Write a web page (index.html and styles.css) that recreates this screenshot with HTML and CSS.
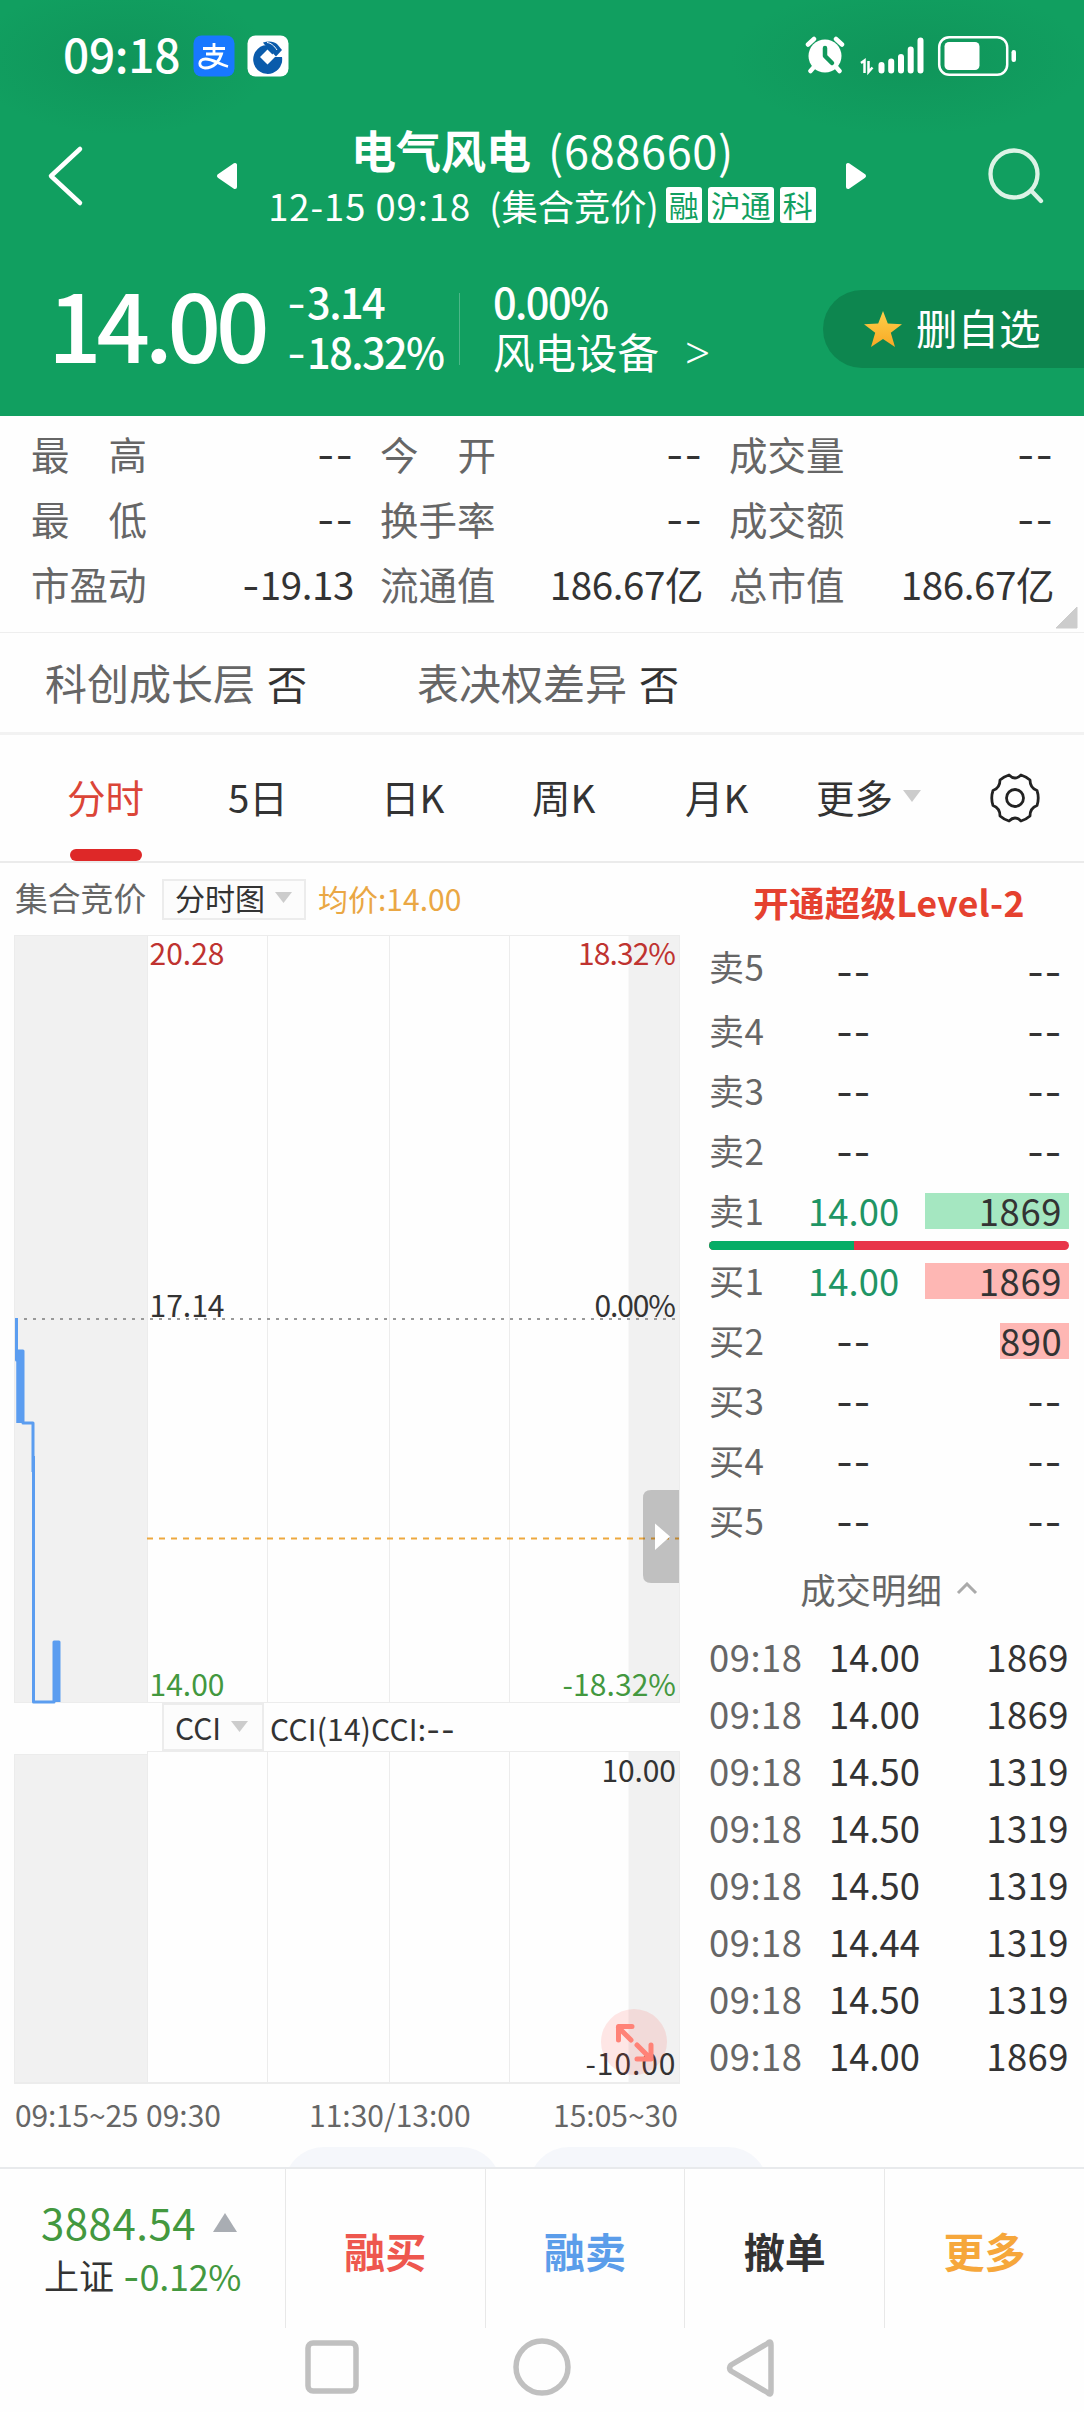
FILE: index.html
```html
<!DOCTYPE html>
<html lang="zh-CN">
<head>
<meta charset="utf-8">
<title>电气风电 (688660)</title>
<link rel="stylesheet" href="styles.css">
</head>
<body>
<div class="screen">
  <header class="top">
    <div class="status">
      <span class="clock">09:18</span>
      <svg class="app-icon" width="42" height="42" viewBox="0 0 42 42">
        <rect x=".5" y=".5" width="41" height="41" rx="8" fill="#1878ff"/>
        <path d="M10 13.500h22M21 8v11M13 19h15.500C26.500 26 21 33 12 33 5 33 5 24 12.500 24 20 24 26 29.500 35 31.500" fill="none" stroke="#fff" stroke-width="2.800"/>
      </svg>
      <svg class="app-icon second" width="42" height="42" viewBox="0 0 42 42">
        <rect x=".5" y=".5" width="41" height="41" rx="8" fill="#fff"/>
        <path d="M29 12.500A14.500 14.500 0 1 0 35 22H28L20.500 29.500 13 22l7.500-7.500 5 5Z" fill="#0a5bab"/>
        <path d="M16 7.500c6-2 11-1 14 1.500l5 6-6 6.500L17 9Z" fill="#0a5bab"/>
        <path d="M20 7.500c4 .5 7 3 10 7.500" fill="none" stroke="#fff" stroke-width="1"/>
      </svg>
      <svg class="status-icons" width="212" height="42" viewBox="0 0 212 42">
        <circle cx="20" cy="21" r="16.500" fill="#fff"/>
        <path d="M3 9.500 9 4M31 4l6 5.500M9 32l-3.500 4M31 32l3.500 4" stroke="#fff" stroke-width="4.500" stroke-linecap="round"/>
        <path d="M20 13v8l7 7" fill="none" stroke="#11985b" stroke-width="4.500" stroke-linecap="round" stroke-linejoin="round"/>
        <path d="M56 28l3.500-2.500V38M63.500 26v11l4-4.500" fill="none" stroke="#fff" stroke-width="2.500"/>
        <path d="M76.500 30v5.500M86.200 26.500v9M96 22v13.500M105.700 14.500v21M115.500 5.500v30" stroke="#fff" stroke-width="6" stroke-linecap="round"/>
        <rect x="134.200" y="2.200" width="68" height="37.500" rx="10" fill="none" stroke="#fff" stroke-width="2.500"/>
        <rect x="139.500" y="7" width="35" height="28" rx="4.500" fill="#fff"/>
        <rect x="206.500" y="15" width="4.500" height="12" rx="2.200" fill="#fff"/>
      </svg>
    </div>
    <div class="titlebar">
      <svg class="back" width="38" height="62" viewBox="0 0 38 62"><path d="M33 4 4 31l29 27" fill="none" stroke="#fff" stroke-width="4.500" stroke-linecap="round" stroke-linejoin="round"/></svg>
      <svg class="prev" width="22" height="28" viewBox="0 0 22 28"><path d="M19 3v22L3 14Z" fill="#fff" stroke="#fff" stroke-width="4" stroke-linejoin="round"/></svg>
      <div class="heading">
        <h1 class="name"><span class="cn">电气风电</span><span class="code">(688660)</span></h1>
        <div class="session">
          <span class="date">12-15 09:18</span><span class="phase">(集合竞价)</span><span class="badge">融</span><span class="badge">沪通</span><span class="badge">科</span>
        </div>
      </div>
      <svg class="next" width="22" height="28" viewBox="0 0 22 28"><path d="M3 3v22l16-11Z" fill="#fff" stroke="#fff" stroke-width="4" stroke-linejoin="round"/></svg>
      <svg class="search" width="58" height="58" viewBox="0 0 58 58"><g fill="none" stroke="#dcf3e6" stroke-width="4.300" stroke-linecap="round"><circle cx="28" cy="27" r="23.500"/><path d="m46 44.500 9 9.500"/></g></svg>
    </div>
    <div class="quote">
      <span class="price">14.00</span>
      <div class="change"><span><b class="neg">-</b>3.14</span><span><b class="neg">-</b>18.32%</span></div>
      <i class="rule"></i>
      <div class="sector"><span>0.00%</span><span class="sector-name">风电设备<b class="more-arrow">&gt;</b></span></div>
      <div class="watch">
        <svg width="38" height="37" viewBox="0 0 38 37"><defs><linearGradient id="gold" x1="0" y1="0" x2="0" y2="1"><stop offset="0" stop-color="#fdd04a"/><stop offset="1" stop-color="#f9a825"/></linearGradient></defs><path d="M19 0l4.800 12.500L38 13.300 26.800 21.700 31 36 19 28 7 36l4.200-14.300L0 13.300l14.200-.8Z" fill="url(#gold)"/></svg>
        <span>删自选</span>
      </div>
    </div>
  </header>

  <section class="stats">
    <div class="stat"><span class="k">最<i></i>高</span><span class="dash">--</span></div>
    <div class="stat"><span class="k">今<i></i>开</span><span class="dash">--</span></div>
    <div class="stat"><span class="k">成交量</span><span class="dash">--</span></div>
    <div class="stat"><span class="k">最<i></i>低</span><span class="dash">--</span></div>
    <div class="stat"><span class="k">换手率</span><span class="dash">--</span></div>
    <div class="stat"><span class="k">成交额</span><span class="dash">--</span></div>
    <div class="stat"><span class="k">市盈动</span><span class="v"><b class="neg">-</b>19.13</span></div>
    <div class="stat"><span class="k">流通值</span><span class="v">186.67亿</span></div>
    <div class="stat"><span class="k">总市值</span><span class="v">186.67亿</span></div>
    <svg class="corner" width="23" height="23" viewBox="0 0 23 23"><path d="M22 1v21H1Z" fill="#ccc" stroke="#ccc" stroke-linejoin="round"/></svg>
  </section>

  <section class="attrs">
    <div class="attr">科创成长层<em>否</em></div>
    <div class="attr">表决权差异<em>否</em></div>
  </section>

  <nav class="tabs">
    <span class="tab t1 active">分时</span>
    <span class="tab t2">5日</span>
    <span class="tab t3">日K</span>
    <span class="tab t4">周K</span>
    <span class="tab t5">月K</span>
    <span class="tab t6">更多<svg width="18" height="12" viewBox="0 0 18 12"><path d="M0 0h18L9 12Z" fill="#ccc"/></svg></span>
    <svg class="gear" width="50" height="50" viewBox="-25 -25 50 50"><g fill="none" stroke="#222" stroke-width="2.800" stroke-linejoin="round"><path d="M-6-23Q0-17 6-23 11-21.500 15-18 15-10 22-7.500 24.500 0 22 7.500 15 10 15 18 11 21.500 6 23 0 17-6 23-11 21.500-15 18-15 10-22 7.500-24.500 0-22-7.500-15-10-15-18-11-21.500-6-23Z"/><circle r="8.500"/></g></svg>
  </nav>

  <main class="main">
    <div class="charts">
      <div class="chart-head">
        <span class="auction">集合竞价</span>
        <span class="select">分时图<svg width="17" height="11" viewBox="0 0 17 11"><path d="M0 0h17L8.500 11Z" fill="#ccc"/></svg></span>
        <span class="avg">均价:14.00</span>
      </div>
      <div class="plot">
        <svg class="chart" width="681" height="768" viewBox="0 935 681 768">
          <rect x="14" y="935" width="133" height="768" fill="#f1f1f1"/>
          <rect x="628.500" y="935" width="51.500" height="768" fill="#f1f1f1"/>
          <path d="M14 935.500H680M14 1702.500H680M14.500 935V1703M147.500 935V1703M267.500 935V1703M389.500 935V1703M509.500 935V1703M679.500 935V1703" fill="none" stroke="#ececec"/>
          <path d="M24 1319H679" stroke="#999" stroke-width="2" stroke-dasharray="3 6"/>
          <path d="M147 1538.500H679" stroke="#eda83e" stroke-width="2" stroke-dasharray="6 6"/>
          <g fill="none" stroke="#5b9df0" stroke-width="3" stroke-linejoin="round">
            <path d="M16.500 1318V1360H18M17 1351H23V1423H33V1472M33.500 1456V1702H54V1642H59V1702"/>
            <path d="M20 1350V1423" stroke-width="7.500"/>
            <path d="M56.500 1641V1702" stroke-width="6"/>
          </g>
          <g class="axis">
            <text class="up" x="149.500" y="965" textLength="75">20.28</text>
            <text class="up" x="578" y="965" textLength="98">18.32%</text>
            <text x="149.500" y="1316.500" textLength="75">17.14</text>
            <text x="594.500" y="1316.500" textLength="81.500">0.00%</text>
            <text class="down" x="149.500" y="1695.500" textLength="75">14.00</text>
            <text class="down" x="562.500" y="1695.500" textLength="113.500">-18.32%</text>
          </g>
        </svg>
        <svg class="handle" width="36" height="93" viewBox="0 0 36 93"><path d="M36 0H8Q0 0 0 8V85Q0 93 8 93H36Z" fill="#000" fill-opacity=".2"/><path d="M12 33.500 27 46.500 12 60Z" fill="#fff"/></svg>
      </div>
      <div class="ind-head">
        <span class="select small">CCI<svg width="17" height="11" viewBox="0 0 17 11"><path d="M0 0h17L8.500 11Z" fill="#ccc"/></svg></span>
        <span class="ind-text">CCI(14)CCI:<b class="neg">--</b></span>
      </div>
      <div class="plot">
        <svg class="chart" width="681" height="333" viewBox="0 1751 681 333">
          <rect x="14" y="1754" width="133" height="330" fill="#f1f1f1"/>
          <rect x="628.500" y="1751" width="51.500" height="333" fill="#f1f1f1"/>
          <path d="M147 1751.500H680M14 1754.500H147M14.500 1754V2083M147.500 1751V2083M267.500 1751V2083M389.500 1751V2083M509.500 1751V2083M679.500 1751V2083" fill="none" stroke="#ececec"/>
          <path d="M14 2083H680" stroke="#ececec" stroke-width="2"/>
          <g class="axis">
            <text x="601.500" y="1781.500" textLength="74.500">10.00</text>
            <text x="585.500" y="2075" textLength="90">-10.00</text>
          </g>
        </svg>
        <svg class="expand" width="66" height="66" viewBox="0 0 66 66"><circle cx="33" cy="33" r="33" fill="#ff3c32" fill-opacity=".12"/><path d="M30 31 17.500 18.500M17.500 31V17.500H31M36 36 49 49M50 36V50H36" fill="none" stroke="#ff8277" stroke-width="5" stroke-linecap="round" stroke-linejoin="round"/></svg>
      </div>
      <div class="time-axis"><span class="a1">09:15~25</span><span class="a2">09:30</span><span class="a3">11:30/13:00</span><span class="a4">15:05~30</span></div>
      <div class="chips"><i class="chip c1"></i><i class="chip c2"></i></div>
    </div>

    <aside class="book">
      <h2 class="level2">开通超级Level-2</h2>
      <div class="row first"><span>卖5</span><span class="px none">--</span><span class="vol none">--</span></div>
      <div class="row"><span>卖4</span><span class="px none">--</span><span class="vol none">--</span></div>
      <div class="row"><span>卖3</span><span class="px none">--</span><span class="vol none">--</span></div>
      <div class="row"><span>卖2</span><span class="px none">--</span><span class="vol none">--</span></div>
      <div class="row"><span>卖1</span><span class="px">14.00</span><span class="vol ask" style="width:144px">1869</span></div>
      <div class="ratio"><i style="width:40.4%"></i></div>
      <div class="row"><span>买1</span><span class="px">14.00</span><span class="vol bid" style="width:144px">1869</span></div>
      <div class="row"><span>买2</span><span class="px none">--</span><span class="vol bid" style="width:69px">890</span></div>
      <div class="row"><span>买3</span><span class="px none">--</span><span class="vol none">--</span></div>
      <div class="row"><span>买4</span><span class="px none">--</span><span class="vol none">--</span></div>
      <div class="row"><span>买5</span><span class="px none">--</span><span class="vol none">--</span></div>
      <div class="detail">成交明细<svg width="22" height="13" viewBox="0 0 22 13"><path d="m2 11 9-9 9 9" fill="none" stroke="#aaa" stroke-width="3"/></svg></div>
      <div class="trade"><span>09:18</span><span>14.00</span><span>1869</span></div>
      <div class="trade"><span>09:18</span><span>14.00</span><span>1869</span></div>
      <div class="trade"><span>09:18</span><span>14.50</span><span>1319</span></div>
      <div class="trade"><span>09:18</span><span>14.50</span><span>1319</span></div>
      <div class="trade"><span>09:18</span><span>14.50</span><span>1319</span></div>
      <div class="trade"><span>09:18</span><span>14.44</span><span>1319</span></div>
      <div class="trade"><span>09:18</span><span>14.50</span><span>1319</span></div>
      <div class="trade"><span>09:18</span><span>14.00</span><span>1869</span></div>
    </aside>
  </main>

  <footer class="actions">
    <div class="index">
      <div class="index-value">3884.54<svg width="24" height="19" viewBox="0 0 24 19"><path d="M12 0 24 19H0Z" fill="#a9adb3"/></svg></div>
      <div class="index-name">上证<span><b class="neg">-</b>0.12%</span></div>
    </div>
    <div class="act buy">融买</div>
    <div class="act sell">融卖</div>
    <div class="act cancel">撤单</div>
    <div class="act more">更多</div>
  </footer>
  <div class="sysnav">
    <svg width="54" height="54" viewBox="0 0 54 54"><rect x="3" y="3" width="48" height="48" rx="5" fill="none" stroke="#c0c0c0" stroke-width="5.500"/></svg>
    <svg width="58" height="58" viewBox="0 0 58 58"><circle cx="29" cy="29" r="26" fill="none" stroke="#c0c0c0" stroke-width="5.500"/></svg>
    <svg width="50" height="60" viewBox="0 0 50 60"><path d="M41.500 5.500Q45 2 45 7V53Q45 58 41.500 54.500L5 33Q2 30 5 27Z" fill="none" stroke="#c0c0c0" stroke-width="5.500" stroke-linejoin="round"/></svg>
  </div>
</div>
</body>
</html>
```

FILE: styles.css
```css
* { box-sizing: border-box; margin: 0; padding: 0; }
body {
  width: 1084px;
  background: #fefefe;
  color: #333;
  font-family: "Noto Sans CJK SC", sans-serif;
  font-size: 36px;
}
i, em { font-style: normal; }
svg { display: block; flex: none; }
span { white-space: nowrap; }
.screen { width: 1084px; height: 2412px; overflow: hidden; display: flex; flex-direction: column; }
.neg { font-family: Inter, sans-serif; font-weight: 400; line-height: 0; letter-spacing: 0; }

/* header */
.top {
  height: 416px; flex: none; color: #fff; display: flex; flex-direction: column;
  background:
    radial-gradient(ellipse 150px 75px at 122px 60px, rgba(15, 140, 85, .55), rgba(15, 140, 85, 0)),
    radial-gradient(ellipse 180px 75px at 910px 60px, rgba(15, 140, 85, .55), rgba(15, 140, 85, 0)),
    #119f60;
}
.status { height: 112px; display: flex; align-items: center; padding-left: 63px; }
.clock { width: 130px; font-size: 46px; line-height: 60px; padding-bottom: 7px; font-weight: 500; letter-spacing: -.3px; }
.app-icon.second { margin-left: 12px; }
.status-icons { margin-left: 516px; }
.titlebar { height: 128px; display: flex; align-items: center; }
.back { margin-left: 47px; }
.prev { margin-left: 131px; }
.heading { width: 607px; padding-bottom: 2px; display: flex; flex-direction: column; align-items: center; }
.name { height: 60px; line-height: 60px; font-size: 45px; font-weight: 700; display: flex; gap: 17px; padding-left: 2px; }
.code { font-weight: 400; letter-spacing: .7px; }
.session { height: 50px; line-height: 50px; font-size: 36.300px; display: flex; align-items: center; padding-left: 1px; }
.date { letter-spacing: 1px; }
.phase { margin: 0 7px 0 18px; letter-spacing: 0; }
.badge { height: 36px; line-height: 34px; padding: 0 3px; margin-right: 6px; border-radius: 3px; background: #fff; color: #119f60; font-size: 30px; }
.badge:last-child { margin-right: 0; }
.search { margin-left: 119px; }
.quote { height: 172px; display: flex; align-items: center; padding-left: 48px; }
.price { width: 239px; font-size: 94px; line-height: 110px; font-weight: 500; padding-bottom: 8px; letter-spacing: -5.200px; }
.change, .sector { font-size: 41.500px; line-height: 50px; display: flex; flex-direction: column; font-weight: 500; letter-spacing: -1.600px; }
.change { width: 172px; }
.change .neg { letter-spacing: 1px; }
.rule { width: 1px; height: 72px; background: rgba(255, 255, 255, .25); margin-top: 6px; }
.sector { padding-left: 33px; }
.sector-name { font-weight: 400; letter-spacing: 0; }
.more-arrow { font-family: "Noto Sans", sans-serif; font-weight: 300; font-size: 44px; margin-left: 26px; line-height: 0; }
.watch { margin: 6px 0 0 auto; width: 261px; height: 78px; border-radius: 39px 0 0 39px; background: #0d864f; display: flex; align-items: center; padding-left: 41px; font-size: 41.500px; line-height: 50px; }
.watch span { margin: -4px 0 0 14px; }

/* statistics grid */
.stats { position: relative; height: 217px; flex: none; padding: 5px 0 0 31px; display: grid; grid-template-columns: 323px 323px 325px; grid-template-rows: repeat(3, 65px); column-gap: 26px; border-bottom: 1px solid #eee; }
.stat { display: flex; justify-content: space-between; line-height: 65px; font-size: 38.500px; }
.k { width: 116px; display: flex; justify-content: space-between; color: #666; }
.v { letter-spacing: -.4px; }
.dash { font-family: Inter, sans-serif; font-size: 38px; letter-spacing: 1px; padding-top: 2px; }
.corner { position: absolute; right: 6px; bottom: 3px; }

.attrs { height: 102px; flex: none; display: flex; padding-left: 45px; line-height: 97px; font-size: 42px; color: #666; border-bottom: 3px solid #f2f2f2; }
.attr { width: 372px; }
.attr em { color: #333; font-size: 40px; margin-left: 12px; }

/* period tabs */
.tabs { height: 128px; flex: none; display: flex; padding-left: 67px; border-bottom: 2px solid #ebebeb; line-height: 122px; font-size: 38.500px; }
.tab { position: relative; flex: none; }
.active { color: #db4537; }
.active::after { content: ""; position: absolute; left: 3px; bottom: 0; width: 72px; height: 12px; border-radius: 6px; background: #de2828; }
.t1 { width: 161px; }
.t2 { width: 153px; }
.t3 { width: 151px; }
.t4 { width: 153px; }
.t5 { width: 131px; }
.t6 { width: 174px; height: 122px; display: flex; align-items: center; gap: 10px; }
.gear { margin-top: 38px; }

.main { height: 1304px; flex: none; display: flex; overflow: hidden; }
.charts { width: 709px; flex: none; display: flex; flex-direction: column; }
.chart { overflow: visible; }
.chart-head { height: 72px; display: flex; align-items: center; padding-left: 15px; line-height: 38px; }
.auction { width: 147px; font-size: 32.800px; color: #666; padding-bottom: 4px; }
.select { width: 144px; height: 41px; border: 2px solid #ececec; background: #fcfcfc; display: flex; align-items: center; padding: 0 0 4px 11px; gap: 10px; font-size: 30px; }
.avg { margin-left: 12px; color: #eaa744; font-size: 30px; padding-bottom: 2px; }
.plot { position: relative; }
.handle { position: absolute; left: 643px; top: 555px; }
.axis { font-size: 30px; fill: #333; }
.axis .up { fill: #bf3330; }
.axis .down { fill: #43983f; }
.ind-head { height: 48px; display: flex; align-items: center; padding-left: 162px; }
.small { width: 102px; height: 48px; padding: 0 0 1px 11px; font-size: 30px; }
.ind-text { margin-left: 6px; font-size: 30px; line-height: 40px; padding-top: 2px; letter-spacing: .2px; }
.ind-text .neg { letter-spacing: .8px; }
.expand { position: absolute; left: 601px; top: 258px; }
.time-axis { height: 63px; display: flex; padding-left: 15px; line-height: 60px; font-size: 30px; color: #666; }
.a1 { width: 131px; letter-spacing: -.2px; }
.a2 { width: 163px; }
.a3 { width: 244px; letter-spacing: 0; }
.chips { display: flex; height: 20px; padding-left: 284px; gap: 28px; }
.chip { flex: none; height: 80px; border-radius: 40px; background: #f5f7fb; }
.c1 { width: 217px; }
.c2 { width: 239px; }

/* order book */
.book { width: 360px; flex: none; }
.level2 { height: 70px; line-height: 77px; text-align: center; font-size: 35.500px; letter-spacing: .25px; font-weight: 700; color: #e5412f; }
.row { height: 60px; display: flex; align-items: center; line-height: 36px; font-size: 35px; color: #666; }
.first { height: 68px; }
.row > span:first-child { width: 99px; letter-spacing: .6px; padding-bottom: 2px; }
.px { width: 90px; color: #1f9565; font-size: 36.400px; letter-spacing: .1px; padding-bottom: 2px; white-space: nowrap; }
.px.none { width: 89px; padding: 4px 0 0 28px; }
.row .vol { margin-left: auto; height: 36px; text-align: right; padding-right: 7px; color: #333; font-size: 36.400px; letter-spacing: .6px; line-height: 34px; }
.row .none { font-family: Inter, sans-serif; font-size: 37px; letter-spacing: .5px; color: #333; line-height: 36px; }
.row .vol.none { height: 40px; padding-top: 4px; }
.first .px.none { padding-top: 12px; }
.first .vol.none { height: 48px; padding-top: 12px; }
.ask { background: #a5e7c1; }
.bid { background: #feb7b4; }
.ratio { height: 9px; margin: 0 0 1px; border-radius: 5px; overflow: hidden; background: #e83549; display: flex; }
.ratio i { background: #06ad66; }
.detail { height: 77px; display: flex; align-items: center; justify-content: center; gap: 14px; font-size: 35.400px; line-height: 40px; color: #666; padding-bottom: 2px; }
.trade { height: 57px; display: flex; line-height: 57px; font-size: 36.400px; letter-spacing: .5px; }
.trade span:nth-child(1) { width: 120px; color: #666; }
.trade span:nth-child(2) { letter-spacing: 0; }
.trade span:nth-child(3) { margin-left: auto; }

/* bottom bar */
.actions { height: 161px; flex: none; display: flex; border-top: 2px solid #e8eaec; }
.index { width: 285px; padding: 28px 0 0 41px; }
.index-value { display: flex; align-items: center; gap: 17px; height: 50px; line-height: 50px; font-size: 42px; letter-spacing: .5px; color: #43983f; }
.index-name { display: flex; gap: 9px; height: 50px; line-height: 50px; font-size: 35px; padding-left: 3px; padding-top: 3px; }
.index-name span { color: #43983f; font-size: 36px; letter-spacing: -.3px; }
.act { width: 200px; border-left: 1px solid #e8e8e8; text-align: center; line-height: 162px; font-size: 41px; font-weight: 700; }
.buy { color: #ee574e; }
.sell { color: #5b9dea; }
.cancel { color: #333; }
.more { color: #f6a73b; }
.sysnav { height: 84px; display: flex; padding: 10px 0 0 305px; }
.sysnav svg:nth-child(1) { margin-top: 2px; }
.sysnav svg:nth-child(2) { margin-left: 154px; }
.sysnav svg:nth-child(3) { margin-left: 155px; }
```
